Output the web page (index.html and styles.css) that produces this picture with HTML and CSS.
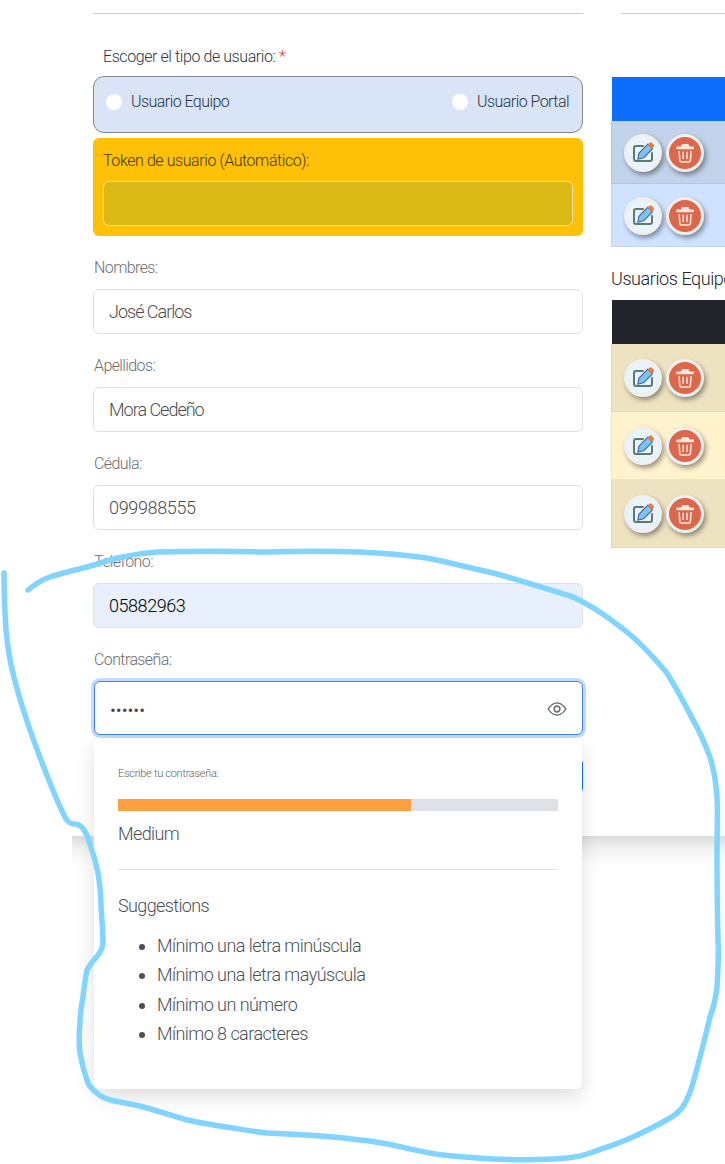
FILE: index.html
```html
<!DOCTYPE html>
<html lang="es">
<head>
<meta charset="utf-8">
<title>Usuarios</title>
<link rel="stylesheet" href="styles.css">
</head>
<body>
<svg width="0" height="0" class="defs" aria-hidden="true">
  <symbol id="i-edit" viewBox="0 0 24 24">
    <path d="M12 5H5Q3 5 3 7V18Q3 20 5 20H19Q21 20 21 18V12" fill="none" stroke="#5f7a6c" stroke-width="2" stroke-linecap="round"/>
    <path d="M16.800 3.200 21.500 7.900 12.500 16.800 6.800 18.200 8 12.200Z" fill="#7cc4ec" stroke="#3f5fa8" stroke-width="1.100" stroke-linejoin="round"/>
    <path d="M16.500 3.500 18.500 1.700Q19.700 1 20.800 1.800L22.700 3.700Q23.400 4.800 22.700 5.800L21 8Z" fill="#ef7a3c"/>
  </symbol>
  <symbol id="i-trash" viewBox="0 0 24 24">
    <path d="M7.500 5 8.800 2.300H15.700L17 5H20.800Q21.800 5 21.800 6.500 21.800 8 20.800 8H3.400Q2.400 8 2.400 6.500 2.400 5 3.400 5Z" fill="#fbe6dd"/>
    <path d="M5.600 9.800 6.300 20Q6.500 21.800 8.200 21.800H16Q17.700 21.800 17.900 20L18.600 9.800" fill="none" stroke="#fbe6dd" stroke-width="1.700"/>
    <path d="M10 10.500V18.500M14.200 10.500V18.500" stroke="#fbe6dd" stroke-width="1.700"/>
  </symbol>
</svg>

<div class="card">
  <form class="form-col">
    <hr class="rule">
    <p class="type-label">Escoger el tipo de usuario: <span class="req">*</span></p>
    <div class="radio-box">
      <label class="radio"><input type="radio" name="tipo"><span>Usuario Equipo</span></label>
      <label class="radio"><input type="radio" name="tipo"><span>Usuario Portal</span></label>
    </div>
    <div class="token-box">
      <label class="token-label" for="token">Token de usuario (Automático):</label>
      <input id="token" class="token-input" type="text" readonly>
    </div>
    <div class="field">
      <label for="n">Nombres:</label>
      <input id="n" class="control" type="text" value="José Carlos">
    </div>
    <div class="field">
      <label for="a">Apellidos:</label>
      <input id="a" class="control" type="text" value="Mora Cedeño">
    </div>
    <div class="field">
      <label for="c">Cédula:</label>
      <input id="c" class="control control-num" type="text" value="099988555">
    </div>
    <div class="field">
      <label for="t">Teléfono:</label>
      <input id="t" class="control control-num control-auto" type="text" value="05882963">
    </div>
    <div class="field field-pass">
      <label for="p">Contraseña:</label>
      <div class="pass-wrap">
        <input id="p" class="control control-focus" type="password" value="123456">
        <svg class="eye" viewBox="0 0 16 16" width="20" height="20" aria-hidden="true">
          <path d="M1 8s2.600-4.800 7-4.800S15 8 15 8s-2.600 4.800-7 4.800S1 8 1 8Z" fill="none" stroke="#6c757d" stroke-width="1.250"/>
          <circle cx="8" cy="8" r="2.300" fill="none" stroke="#6c757d" stroke-width="1.250"/>
        </svg>
        <div class="popover">
          <p class="pop-title">Escribe tu contraseña:</p>
          <div class="meter"><div class="meter-fill" style="width:66.6%"></div></div>
          <p class="pop-text pop-medium">Medium</p>
          <hr class="pop-rule">
          <p class="pop-text">Suggestions</p>
          <ul class="pop-list">
            <li>Mínimo una letra minúscula</li>
            <li>Mínimo una letra mayúscula</li>
            <li>Mínimo un número</li>
            <li>Mínimo 8 caracteres</li>
          </ul>
        </div>
      </div>
    </div>
    <button class="submit" type="button"></button>
  </form>

  <aside class="side">
    <hr class="rule side-rule">
    <div class="tbl tbl-blue">
      <div class="tbl-head"></div>
      <div class="tbl-row">
        <button class="btn btn-edit" type="button"><svg width="24" height="24"><use href="#i-edit"/></svg></button>
        <button class="btn btn-del" type="button"><svg width="22" height="22"><use href="#i-trash"/></svg></button>
      </div>
      <div class="tbl-row">
        <button class="btn btn-edit" type="button"><svg width="24" height="24"><use href="#i-edit"/></svg></button>
        <button class="btn btn-del" type="button"><svg width="22" height="22"><use href="#i-trash"/></svg></button>
      </div>
    </div>
    <h2 class="side-title">Usuarios Equipo</h2>
    <div class="tbl tbl-dark">
      <div class="tbl-head"></div>
      <div class="tbl-row">
        <button class="btn btn-edit" type="button"><svg width="24" height="24"><use href="#i-edit"/></svg></button>
        <button class="btn btn-del" type="button"><svg width="22" height="22"><use href="#i-trash"/></svg></button>
      </div>
      <div class="tbl-row">
        <button class="btn btn-edit" type="button"><svg width="24" height="24"><use href="#i-edit"/></svg></button>
        <button class="btn btn-del" type="button"><svg width="22" height="22"><use href="#i-trash"/></svg></button>
      </div>
      <div class="tbl-row">
        <button class="btn btn-edit" type="button"><svg width="24" height="24"><use href="#i-edit"/></svg></button>
        <button class="btn btn-del" type="button"><svg width="22" height="22"><use href="#i-trash"/></svg></button>
      </div>
    </div>
  </aside>
</div>
<div class="card-shadow"></div>

<svg class="scribble" viewBox="0 0 725 1164" width="725" height="1164" aria-hidden="true">
  <path d="M4 573C4 600 5 615 6 630C8 650 10 662 13 673C18 695 24 712 30 730C37 750 44 768 50 783C55 795 60 808 65 817C68 823 71 824 75 824C81 824 85 830 88 838C92 850 96 862 98 873C100 885 101 895 101 907C102 920 103 932 103 942C103 948 101 951 98 955C94 960 90 964 87 970C85 980 84 988 83 997C81 1008 80 1015 80 1023C79 1033 79 1044 80 1053C82 1065 85 1075 88 1083C91 1089 94 1091 97 1093C101 1097 105 1098 110 1100C120 1102 130 1104 140 1106C155 1110 170 1115 187 1120C203 1123 218 1126 233 1128C245 1130 256 1132 267 1133C290 1134 312 1135 333 1137C345 1138 352 1139 360 1140C372 1141 382 1143 393 1145C410 1149 426 1153 443 1155C460 1157 476 1158 493 1159C520 1160 545 1160 567 1158C577 1157 585 1155 593 1152C607 1147 620 1143 633 1137C646 1131 658 1125 670 1118C677 1114 682 1109 685 1103C689 1096 691 1090 693 1083C699 1061 705 1039 710 1017C714 1006 716 997 717 987C718 971 719 956 718 940C717 900 717 870 717 850C717 830 718 812 717 797C716 782 714 770 710 757C705 744 700 732 693 720C685 704 676 688 667 673C656 660 645 648 633 637C615 622 595 607 573 597C547 589 520 580 493 573C470 568 448 562 427 558C405 555 382 553 360 552C330 551 298 551 267 552C230 551 192 551 157 552C143 553 130 555 117 558C107 561 97 564 87 567C75 570 62 573 50 577C41 580 34 585 28 590" fill="none" stroke="#80d4ff" stroke-width="5.500" stroke-linecap="round" stroke-linejoin="round"/>
</svg>
</body>
</html>
```

FILE: styles.css
```css
* { box-sizing: border-box; }
html, body { margin: 0; padding: 0; background: #fff; }
body {
  width: 725px;
  height: 1164px;
  overflow: hidden;
  position: relative;
  font-family: "Roboto", "Lato", sans-serif;
  font-weight: 300;
  font-size: 16px;
  letter-spacing: -0.42px;
  line-height: 22px;
  color: #2f3642;
}
.defs { position: absolute; }
p { margin: 0; }
.card {
  display: flex;
  gap: 28px;
  margin-left: 72px;
  padding-left: 21px;
  height: 836px;
  background: #fff;
}
.card-shadow {
  margin-left: 72px;
  height: 30px;
  background: linear-gradient(#dcdcdc, #f1f1f1 40%, #fff);
}
.form-col { width: 490px; flex: none; }
.rule { margin: 13px 0 0; border: 0; height: 1px; background: #ccc; }
.type-label { margin: 32px 0 8px 10px; }
.req { color: #dc3545; }
.radio-box {
  display: flex;
  justify-content: space-between;
  height: 57px;
  padding: 14px 13px 0 12px;
  background: #d9e4f6;
  border: 1px solid #85868c;
  border-radius: 11px;
}
.radio { display: flex; align-items: flex-start; gap: 9px; color: #2a3444; letter-spacing: -.55px; }
.radio input {
  appearance: none;
  width: 16px;
  height: 16px;
  margin: 3px 0 0;
  border-radius: 50%;
  background: #fff;
}
.token-box {
  margin-top: 5px;
  height: 98px;
  padding: 12px 10px 0;
  background: #ffc107;
  border-radius: 6px;
}
.token-label { display: block; color: #43370f; margin-bottom: 9px; }
.token-input {
  display: block;
  width: 100%;
  height: 45px;
  background: #dab816;
  border: 1px solid #f0e4a0;
  border-radius: 6px;
}
.field { margin-top: 21px; }
.field label { display: block; padding-left: 1px; color: #6e6e6e; margin-bottom: 10px; letter-spacing: -.6px; }
.control {
  display: block;
  width: 100%;
  height: 45px;
  padding: 0 15px;
  background: #fff;
  border: 1px solid #dee2e6;
  border-radius: 6px;
  font: inherit;
  font-size: 18px;
  letter-spacing: -1px;
  color: #4d4d4d;
  outline: 0;
}
.control-num { letter-spacing: -.35px; }
.control-auto { background: #e8f0fe; color: #000; letter-spacing: -.45px; }
.control-focus {
  width: calc(100% - 1px);
  height: 54px;
  margin: 1px 0 0 1px;
  padding: 4px 15px 0;
  border-color: #3b82f6;
  box-shadow: 0 0 0 3px #c2dbfe;
  letter-spacing: 0;
  color: #444;
  font-size: 18px;
}
.pass-wrap { position: relative; }
.eye { position: absolute; right: 16px; top: 18px; }
.popover {
  position: absolute;
  top: 57px;
  left: 1px;
  right: 1px;
  height: 351px;
  z-index: 2;
  padding: 25px 24px 0;
  background: #fff;
  border-radius: 6px;
  box-shadow: 0 8px 20px rgba(0, 0, 0, .13);
  color: #4a5058;
}
.pop-title { font-size: 11px; color: #5e5e5e; letter-spacing: -.28px; }
.meter { margin-top: 14px; height: 12px; background: #dee2e6; }
.meter-fill { height: 100%; background: #ff9f40; }
.pop-text { font-size: 18px; letter-spacing: -.62px; }
.pop-medium { margin-top: 12px; }
.pop-rule { margin: 24px 0 25px; border: 0; height: 1px; background: #dfdfdf; }
.pop-list { margin: 14px 0 0; padding: 0 0 0 39px; font-size: 18px; line-height: 29.400px; letter-spacing: -.55px; }
.submit {
  display: block;
  width: 200px;
  height: 36px;
  margin: 23px 0 0 auto;
  background: #0d6efd;
  border: 0;
  border-radius: 6px;
}
.side { flex: 1; min-width: 0; overflow: hidden; }
.side-rule { margin-left: 10px; }
.tbl-blue { margin-top: 63px; }
.tbl-head { height: 44px; margin-left: 1px; }
.tbl-blue .tbl-head { background: #0d6efd; }
.tbl-dark .tbl-head { background: #212529; }
.tbl-row {
  display: flex;
  align-items: center;
  gap: 4px;
  padding: 1px 0 0 12px;
  border-left: 1px solid rgba(0, 0, 0, .06);
  border-bottom: 1px solid rgba(0, 0, 0, .06);
}
.tbl-blue .tbl-row { height: 63px; background: #cfe2ff; }
.tbl-blue .tbl-row:nth-child(2) { background: #c1d2ea; }
.tbl-dark .tbl-row { height: 68px; background: #fff3cd; }
.tbl-dark .tbl-row:nth-child(even) { background: #eee3c0; }
.side-title {
  margin: 21px 0 10px;
  font: inherit;
  font-size: 18px;
  line-height: 22px;
  white-space: nowrap;
  color: #20252c;
}
.btn {
  display: flex;
  align-items: center;
  justify-content: center;
  width: 38px;
  height: 38px;
  flex: none;
  padding: 0;
  border-radius: 50%;
  border: 3px solid #eef0f0;
  box-shadow: 2px 3px 5px rgba(0, 0, 0, .4);
}
.btn-edit { background: #e8f3fb; }
.btn-del { background: #dd674a; }
.scribble { position: absolute; left: 0; top: 0; z-index: 5; pointer-events: none; }
```
